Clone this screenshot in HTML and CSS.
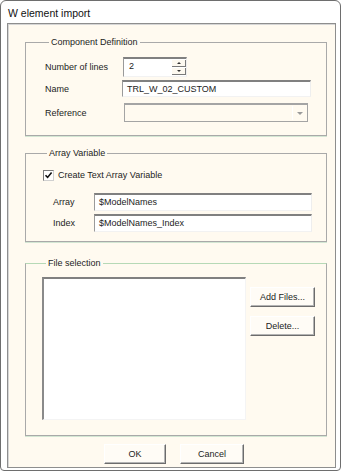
FILE: index.html
```html
<!DOCTYPE html>
<html lang="en">
<head>
    <meta charset="UTF-8">
    <meta name="viewport" content="width=device-width, initial-scale=1.0">
    <title>W element import</title>
    <link rel="stylesheet" href="styles.css">
</head>
<body>
    <div class="window">
        <div class="title">W element import</div>

        <div class="client">
            <!-- Component Definition -->
            <fieldset class="group group-component">
                <legend>Component Definition</legend>
                <div class="row row-lines">
                    <label class="label">Number of lines</label>
                    <div class="spinner">
                        <span class="spinner-value">2</span>
                        <div class="spinner-buttons">
                            <span class="spin-btn"><span class="tri-up"></span></span>
                            <span class="spin-btn"><span class="tri-down"></span></span>
                        </div>
                    </div>
                </div>
                <div class="row row-name">
                    <label class="label">Name</label>
                    <div class="field field-name">TRL_W_02_CUSTOM</div>
                </div>
                <div class="row row-ref">
                    <label class="label">Reference</label>
                    <div class="combo">
                        <span class="combo-btn"><span class="tri-down"></span></span>
                    </div>
                </div>
            </fieldset>

            <!-- Array Variable -->
            <fieldset class="group group-array">
                <legend>Array Variable</legend>
                <div class="check-row">
                    <span class="checkbox">
                        <svg width="9" height="9" viewBox="0 0 9 9"><path d="M1.5 4.2 L3.6 6.4 L7.6 1.6" fill="none" stroke="#111" stroke-width="1.6"/></svg>
                    </span>
                    <span>Create Text Array Variable</span>
                </div>
                <div class="row row-array">
                    <label class="label-short">Array</label>
                    <div class="field field-array">$ModelNames</div>
                </div>
                <div class="row row-index">
                    <label class="label-short">Index</label>
                    <div class="field field-array">$ModelNames_Index</div>
                </div>
            </fieldset>

            <!-- File selection -->
            <fieldset class="group group-files">
                <legend>File selection</legend>
                <div class="files">
                    <div class="listbox"></div>
                    <div class="file-actions">
                        <button class="btn">Add Files...</button>
                        <button class="btn">Delete...</button>
                    </div>
                </div>
            </fieldset>

            <div class="dialog-actions">
                <button class="btn btn-ok">OK</button>
                <button class="btn btn-cancel">Cancel</button>
            </div>
        </div>
    </div>
</body>
</html>
```

FILE: styles.css
```css
* {
    box-sizing: border-box;
}
body {
    margin: 0;
    background: #fff;
    font-family: "Liberation Sans", Arial, sans-serif;
    font-size: 9px;
    color: #1c1c1c;
}
.window {
    width: 341px;
    height: 471px;
    border: 1px solid #6e6e6e;
    border-radius: 6px 6px 4px 4px;
    background: #fff;
    display: flex;
    flex-direction: column;
}
.title {
    height: 22px;
    padding-left: 7px;
    font-size: 10.5px;
    line-height: 24px;
    color: #111;
}
.client {
    flex: 1;
    margin: 0 4px 2px 6px;
    border: 1px solid #8e8e8e;
    box-shadow: inset 1px 1px 0 #d6d6d6;
    background: #fffaf0;
    padding: 12px 8px 3px 17px;
    display: flex;
    flex-direction: column;
}
.group {
    margin: 0;
    padding: 0;
    border: 1px solid #a9a9a9;
    box-shadow: 0 1px 0 #d3e6d3;
    min-width: 0;
}
.group legend {
    margin-left: 4px;
    padding: 0 2px;
    line-height: 12px;
}
.group-component {
    padding: 9px 0 13px 19px;
}
.group-array {
    margin-top: 11px;
    padding: 10px 0 9px 17px;
}
.group-files {
    margin-top: 15px;
    padding: 8px 0 15px 16px;
    border-top-color: #b6d9b6;
}
.row {
    display: flex;
    align-items: center;
}
.label {
    width: 77px;
}
.row-lines {
    height: 20px;
}
.row-name {
    height: 17px;
    margin-top: 3px;
}
.row-ref {
    height: 19px;
    margin-top: 6px;
}
.field {
    height: 100%;
    background: #fff;
    border-top: 2px solid #808080;
    border-left: 1px solid #9a9a9a;
    border-right: 1px solid #eeeeee;
    border-bottom: 1px solid #f2f2f2;
    padding-left: 4px;
    line-height: 14px;
}
.field-name {
    width: 189px;
}
.spinner {
    width: 64px;
    height: 100%;
    margin-left: 1px;
    display: flex;
    background: #fff;
    border-top: 2px solid #808080;
    border-left: 1px solid #9a9a9a;
    border-right: 1px solid #eeeeee;
    border-bottom: 1px solid #f2f2f2;
}
.spinner-value {
    flex: 1;
    padding-left: 5px;
    line-height: 15px;
}
.spinner-buttons {
    width: 14px;
    display: flex;
    flex-direction: column;
    gap: 1px;
    padding: 1px 0;
}
.spin-btn {
    flex: 1;
    display: flex;
    align-items: center;
    justify-content: center;
    background: #fdf9f0;
    border-right: 1px solid #7a7a7a;
    border-bottom: 1px solid #7a7a7a;
}
.tri-up {
    border-left: 2px solid transparent;
    border-right: 2px solid transparent;
    border-bottom: 2px solid #333;
}
.tri-down {
    border-left: 2px solid transparent;
    border-right: 2px solid transparent;
    border-top: 2px solid #333;
}
.combo {
    width: 184px;
    height: 100%;
    margin-left: 2px;
    display: flex;
    justify-content: flex-end;
    border: 1px solid #a4a4a4;
    border-top: 2px solid #a4a4a4;
    background: #fffaf0;
    padding: 1px;
}
.combo-btn {
    width: 14px;
    display: flex;
    align-items: center;
    justify-content: center;
    border-left: 1px solid #fff;
}
.combo-btn .tri-down {
    border-left-width: 3px;
    border-right-width: 3px;
    border-top: 3px solid #9a9a9a;
}
.check-row {
    display: flex;
    align-items: center;
    height: 12px;
}
.checkbox {
    width: 11px;
    height: 11px;
    margin-right: 4px;
    border: 1px solid #7c7c7c;
    border-right-color: #d0d0d0;
    border-bottom-color: #d0d0d0;
    background: #fff;
    display: flex;
    align-items: center;
    justify-content: center;
}
.label-short {
    width: 41px;
    margin-left: 10px;
}
.row-array {
    height: 18px;
    margin-top: 12px;
}
.row-index {
    height: 18px;
    margin-top: 3px;
}
.field-array {
    width: 218px;
}
.files {
    display: flex;
    gap: 4px;
}
.listbox {
    width: 204px;
    height: 143px;
    background: #fff;
    border-top: 2px solid #808080;
    border-left: 2px solid #8a8a8a;
    border-right: 1px solid #f4f4f4;
    border-bottom: 1px solid #f4f4f4;
}
.file-actions {
    display: flex;
    flex-direction: column;
    gap: 9px;
    padding-top: 10px;
}
.btn {
    width: 65px;
    height: 20px;
    padding: 0;
    font-family: inherit;
    font-size: 9px;
    color: #1c1c1c;
    background: #fffcf6;
    border-top: 1px solid #fff;
    border-left: 1px solid #fff;
    border-right: 1px solid #6c6c6c;
    border-bottom: 1px solid #6c6c6c;
    box-shadow: inset -1px -1px 0 #b4b4b4;
}
.dialog-actions {
    display: flex;
    gap: 14px;
    margin-top: 8px;
    padding-left: 79px;
}
.btn-ok {
    width: 62px;
}
.btn-cancel {
    width: 64px;
}
```
